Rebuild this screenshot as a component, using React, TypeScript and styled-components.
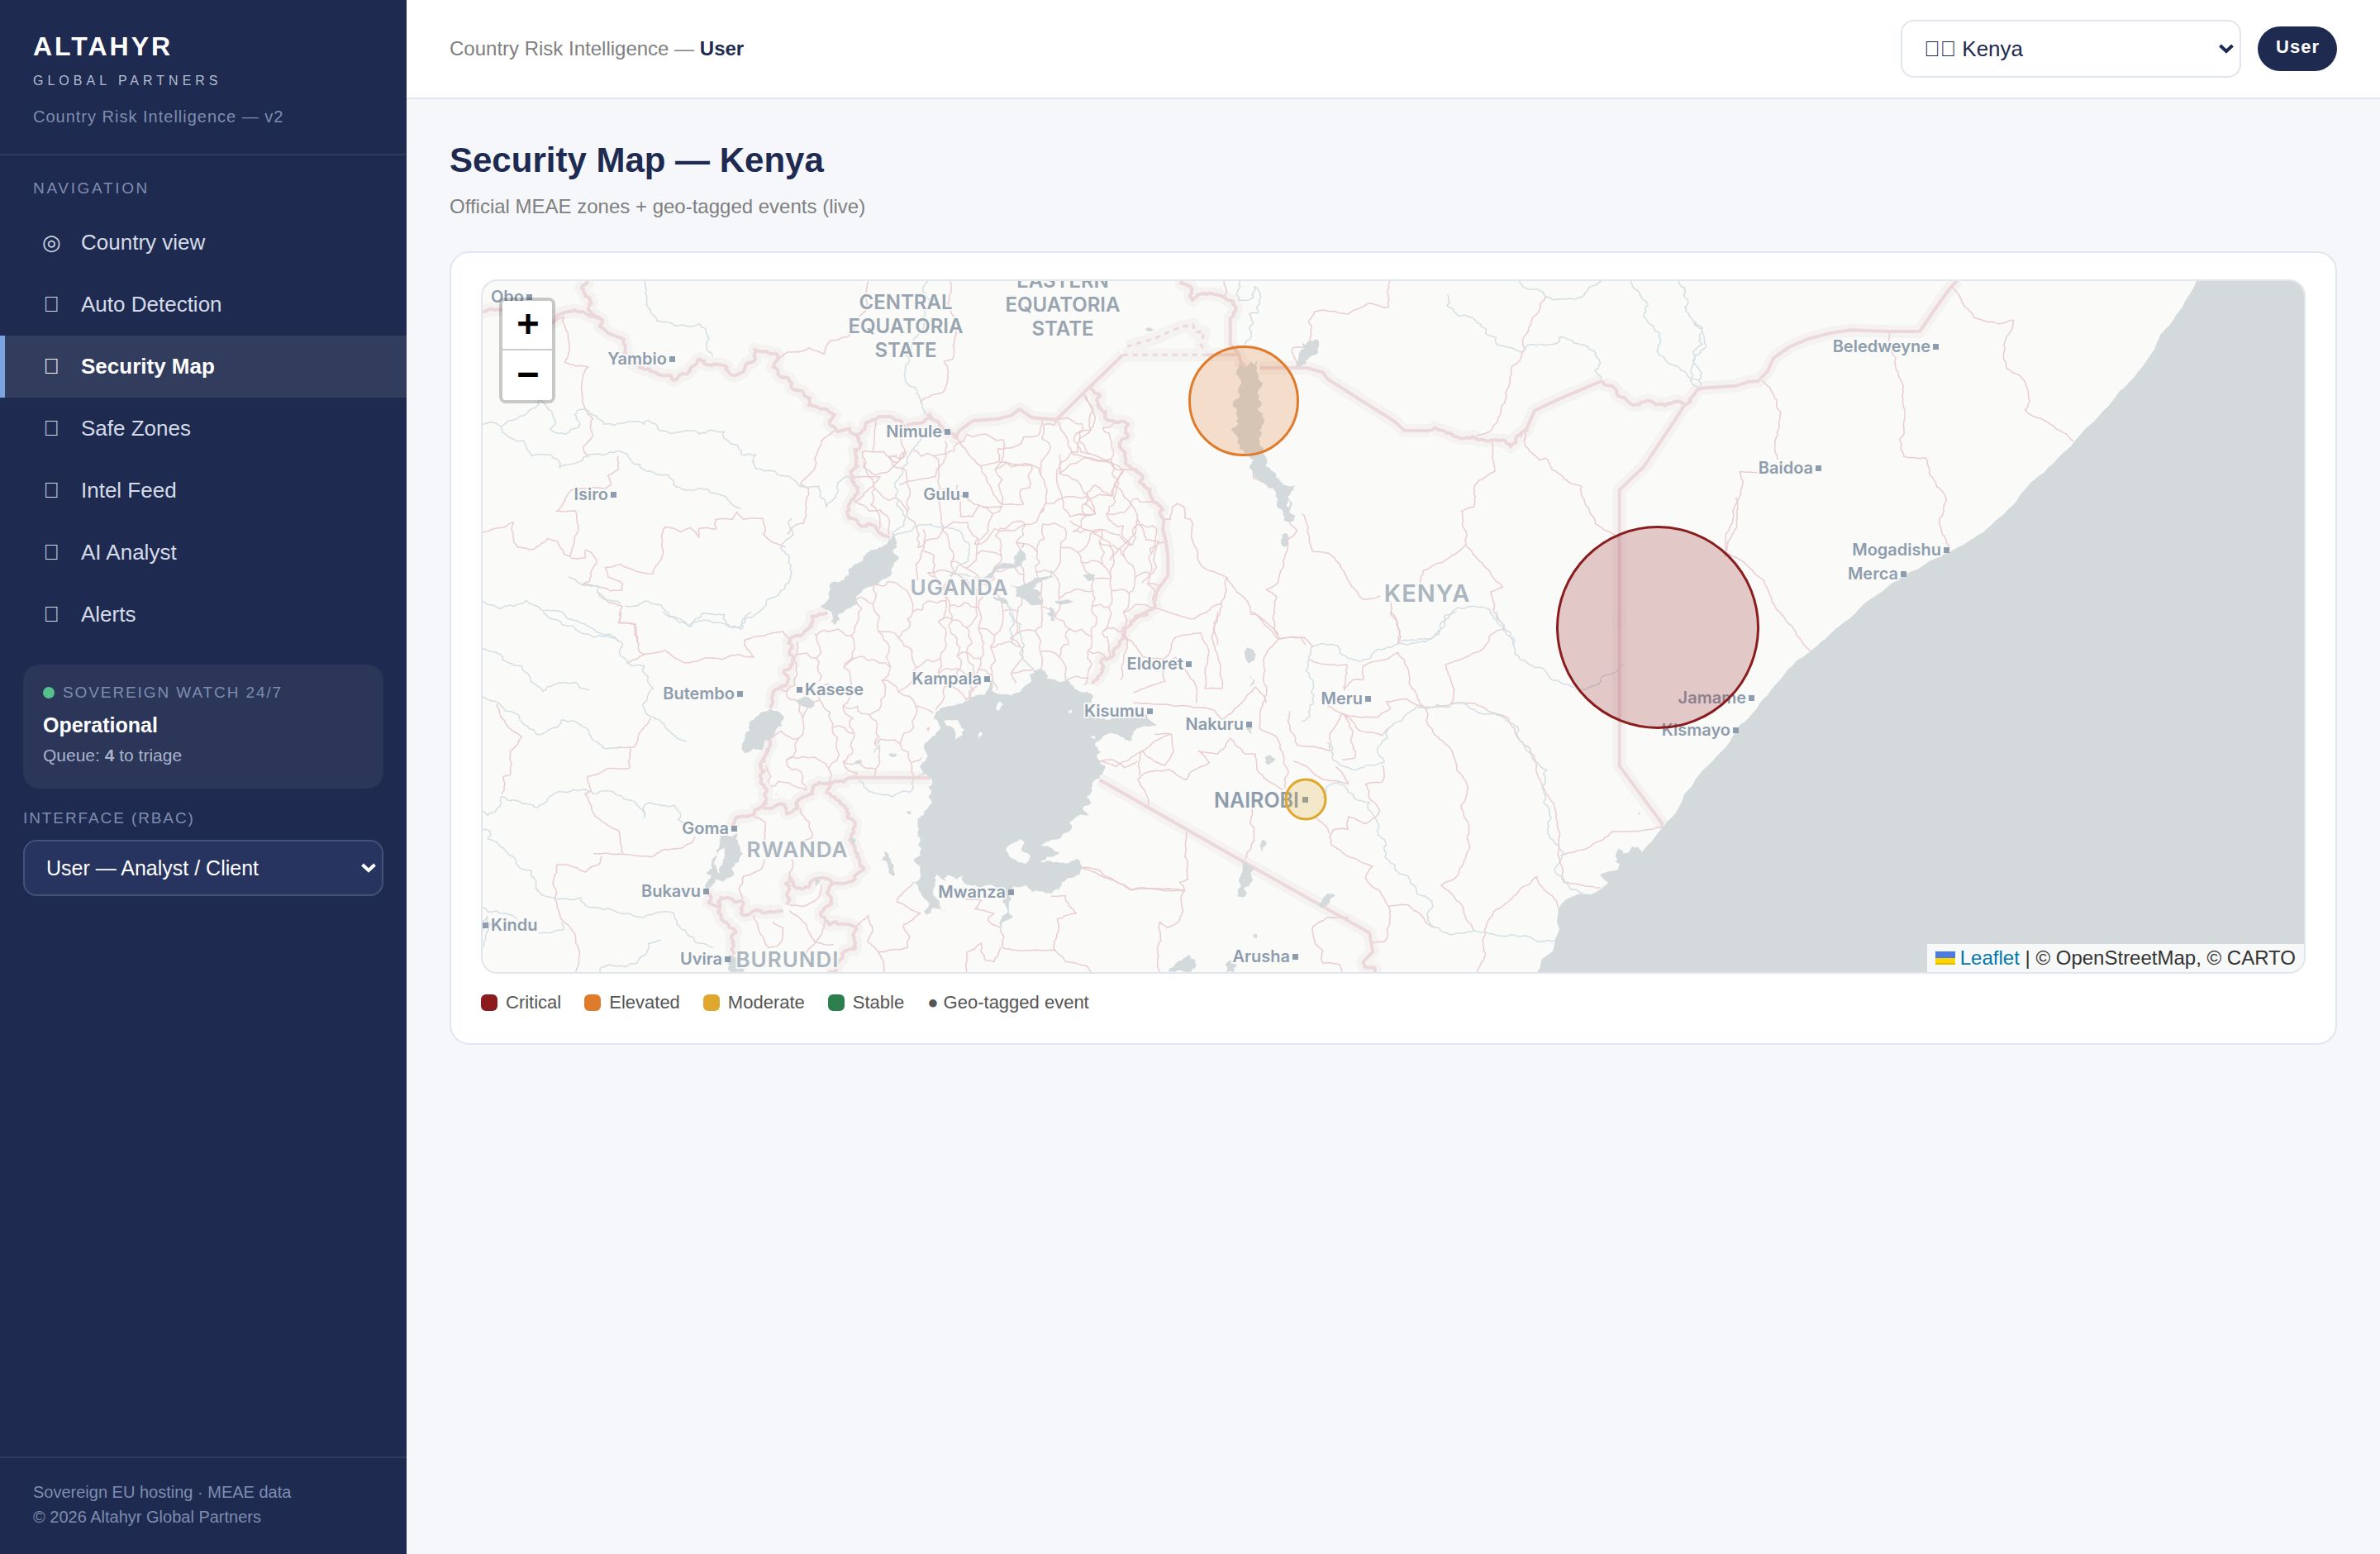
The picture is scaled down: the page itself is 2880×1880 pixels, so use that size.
import React from "react";
import styled, { createGlobalStyle, css } from "styled-components";

/* ------------------------------------------------------------------ */
/* Theme                                                               */
/* ------------------------------------------------------------------ */

const c = {
  navy: "#1e2a4f",
  navyField: "#27345f",
  navyFieldLine: "#465177",
  page: "#f5f7fb",
  line: "#e2e6ed",
  muted: "#808080",
  sideText: "#d5dbe8",
  sideMuted: "#7f8db0",
  critical: "#8b1c1e",
  elevated: "#e07b2c",
  moderate: "#dfa72c",
  stable: "#2c7f4d",
  land: "#fafaf8",
  water: "#d4dadc",
};

const GlobalStyle = createGlobalStyle`
  *, *::before, *::after { box-sizing: border-box; }
  body {
    margin: 0;
    background: ${c.page};
    color: ${c.navy};
    font-family: "Liberation Sans", Arial, Helvetica, sans-serif;
    font-size: 26px;
    line-height: 1.5;
  }
`;

/* ------------------------------------------------------------------ */
/* Sidebar                                                             */
/* ------------------------------------------------------------------ */

const Shell = styled.div`
  display: flex;
  min-height: 100vh;
`;

const Sidebar = styled.aside`
  display: flex;
  flex-direction: column;
  flex: 0 0 492px;
  background: ${c.navy};
`;

const Brand = styled.div`
  padding: 32px 40px 30px;
  border-bottom: 2px solid rgba(255, 255, 255, 0.08);
`;

const BrandName = styled.div`
  font-size: 32px;
  line-height: 48px;
  font-weight: 700;
  letter-spacing: 3px;
  color: #fff;
`;

const BrandSub = styled.div`
  margin-top: 6px;
  font-size: 16px;
  line-height: 24px;
  letter-spacing: 5px;
  color: #b3bdd2;
`;

const BrandTag = styled.div`
  margin-top: 16px;
  font-size: 20px;
  line-height: 30px;
  letter-spacing: 1px;
  color: ${c.sideMuted};
`;

const caption = css`
  display: block;
  font-size: 19px;
  line-height: 28px;
  letter-spacing: 0.1em;
  color: ${c.sideMuted};
`;

const NavTitle = styled.div`
  ${caption}
  padding: 26px 40px 14px;
  letter-spacing: 0.14em;
`;

const NavItem = styled.a<{ $active?: boolean }>`
  display: flex;
  align-items: center;
  gap: 20px;
  height: 75px;
  padding: 0 40px;
  border-left: 6px solid ${(p) => (p.$active ? "#7ba3e0" : "transparent")};
  background: ${(p) => (p.$active ? "rgba(255, 255, 255, 0.09)" : "none")};
  color: ${(p) => (p.$active ? "#fff" : c.sideText)};
  font-weight: ${(p) => (p.$active ? 700 : 400)};
  text-decoration: none;
`;

const NavIcon = styled.span`
  width: 32px;
  text-align: center;
  font-weight: 400;
`;

const Watch = styled.section`
  margin: 23px 28px 0;
  padding: 20px 24px 24px;
  border-radius: 20px;
  background: rgba(255, 255, 255, 0.06);
`;

const WatchLabel = styled.div`
  ${caption}
  display: flex;
  align-items: center;
  gap: 10px;
`;

const Dot = styled.span`
  width: 14px;
  height: 14px;
  border-radius: 50%;
  background: #55c18c;
`;

const WatchState = styled.div`
  margin-top: 6px;
  font-size: 25px;
  line-height: 38px;
  font-weight: 700;
  color: #fff;
`;

const WatchQueue = styled.div`
  margin-top: 2px;
  font-size: 21px;
  line-height: 32px;
  color: #a9b3cc;
`;

const RoleField = styled.div`
  margin: 22px 28px 0;
`;

const RoleLabel = styled.label`
  ${caption}
  margin-bottom: 12px;
`;

const SideFooter = styled.footer`
  margin-top: auto;
  padding: 26px 40px 30px;
  border-top: 2px solid rgba(255, 255, 255, 0.08);
  font-size: 20px;
  line-height: 30px;
  color: ${c.sideMuted};
`;

/* ------------------------------------------------------------------ */
/* Select                                                              */
/* ------------------------------------------------------------------ */

const SelectWrap = styled.div`
  position: relative;
`;

const SelectBox = styled.select<{ $dark?: boolean }>`
  appearance: none;
  display: block;
  width: 100%;
  height: ${(p) => (p.$dark ? 68 : 70)}px;
  padding: 0 48px 0 26px;
  border: 2px solid ${(p) => (p.$dark ? c.navyFieldLine : c.line)};
  border-radius: 16px;
  background: ${(p) => (p.$dark ? c.navyField : "#fff")};
  color: ${(p) => (p.$dark ? "#fff" : c.navy)};
  font-family: inherit;
  font-size: ${(p) => (p.$dark ? 25 : 26)}px;
`;

const SelectArrow = styled.svg<{ $dark?: boolean }>`
  position: absolute;
  right: 9px;
  top: 50%;
  width: 18px;
  height: 12px;
  margin-top: -6px;
  fill: none;
  stroke: ${(p) => (p.$dark ? "#fff" : c.navy)};
  stroke-width: 4;
  pointer-events: none;
`;

interface SelectProps {
  id: string;
  dark?: boolean;
  label?: string;
  options: string[];
}

function Select({ id, dark, label, options }: SelectProps) {
  return (
    <SelectWrap>
      <SelectBox id={id} $dark={dark} aria-label={label}>
        {options.map((o) => (
          <option key={o}>{o}</option>
        ))}
      </SelectBox>
      <SelectArrow $dark={dark} viewBox="0 0 18 12" aria-hidden="true">
        <path d="M1.5 2 L9 9 L16.5 2" />
      </SelectArrow>
    </SelectWrap>
  );
}

/* ------------------------------------------------------------------ */
/* Main column                                                         */
/* ------------------------------------------------------------------ */

const Main = styled.div`
  flex: 1;
  min-width: 0;
`;

const Topbar = styled.header`
  display: flex;
  align-items: center;
  gap: 20px;
  height: 120px;
  padding: 0 52px;
  border-bottom: 2px solid ${c.line};
  background: #fff;
`;

const Crumb = styled.div`
  margin-right: auto;
  font-size: 24px;
  color: ${c.muted};

  strong {
    color: ${c.navy};
  }
`;

const CountryField = styled.div`
  width: 412px;
`;

const RoleBadge = styled.span`
  padding: 11px 21px 15px 22px;
  border-radius: 27px;
  background: ${c.navy};
  color: #fff;
  font-size: 22px;
  line-height: 28px;
  font-weight: 700;
  letter-spacing: 1px;
`;

const Content = styled.main`
  padding: 48px 52px;
`;

const Title = styled.h1`
  margin: 0;
  font-size: 42px;
  line-height: 52px;
`;

const Subtitle = styled.p`
  margin: 12px 0 36px;
  font-size: 24px;
  line-height: 36px;
  color: ${c.muted};
`;

const Card = styled.section`
  padding: 32px 36px;
  border: 2px solid ${c.line};
  border-radius: 24px;
  background: #fff;
`;

const MapFrame = styled.div`
  position: relative;
  height: 840px;
  overflow: hidden;
  border: 2px solid ${c.line};
  border-radius: 20px;
  background: ${c.land};
`;

const MapCanvas = styled.svg`
  display: block;
  width: 100%;
  height: 100%;

  path {
    fill: none;
    vector-effect: non-scaling-stroke;
    stroke-linejoin: round;
  }
`;

const ZoomControl = styled.div`
  position: absolute;
  left: 20px;
  top: 20px;
  display: flex;
  flex-direction: column;
  border: 4px solid rgba(0, 0, 0, 0.2);
  border-radius: 8px;
  background-clip: padding-box;
`;

const ZoomButton = styled.button`
  width: 60px;
  height: 60px;
  padding: 0 0 4px;
  border: 0;
  background: #fff;
  color: #000;
  font: 700 44px / 54px "Lucida Console", Monaco, monospace;
  text-indent: 2px;

  &:first-child {
    border-bottom: 2px solid #ccc;
    border-radius: 4px 4px 0 0;
  }

  &:last-child {
    border-radius: 0 0 4px 4px;
  }
`;

const Attribution = styled.div`
  position: absolute;
  right: 0;
  bottom: 0;
  padding: 0 10px;
  background: rgba(255, 255, 255, 0.8);
  color: #333;
  font-size: 24px;
  line-height: 34px;

  a {
    color: #0078a8;
    text-decoration: none;
  }

  svg {
    width: 24px;
    height: 16px;
    margin-right: 6px;
  }
`;

const Legend = styled.ul`
  display: flex;
  flex-wrap: wrap;
  gap: 28px;
  margin: 18px 0 0;
  padding: 0;
  list-style: none;
  font-size: 22px;
  line-height: 34px;
  color: #555;
`;

const LegendItem = styled.li`
  display: flex;
  align-items: center;
  gap: 10px;
`;

const Swatch = styled.span<{ $color: string }>`
  width: 20px;
  height: 20px;
  border-radius: 6px;
  background: ${(p) => p.$color};
`;

/* ------------------------------------------------------------------ */
/* Base map                                                            */
/* ------------------------------------------------------------------ */

type Pt = [number, number];

/** Small deterministic random source, so the map is the same every time. */
function randomFrom(seed: number) {
  let s = seed;
  return () => {
    s = (s * 16807) % 2147483647;
    return s / 2147483647 - 0.5;
  };
}

/** Turns "x,y x,y" into a path whose segments wander like a natural line. */
function trace(points: string, rough = 0.3, close = false): string {
  const pts = points
    .trim()
    .split(/\s+/)
    .map((p) => p.split(",").map(Number) as Pt);
  if (close) pts.push(pts[0]);
  const rnd = randomFrom(points.length * 977 + Math.round(pts[0][0]) + 7);
  const out: Pt[] = [pts[0]];
  const split = (a: Pt, b: Pt) => {
    const dx = b[0] - a[0];
    const dy = b[1] - a[1];
    const len = Math.hypot(dx, dy);
    if (rough === 0 || len < 9) {
      out.push(b);
      return;
    }
    const k = rnd() * rough;
    const m: Pt = [(a[0] + b[0]) / 2 - dy * k, (a[1] + b[1]) / 2 + dx * k];
    split(a, m);
    split(m, b);
  };
  for (let i = 1; i < pts.length; i++) split(pts[i - 1], pts[i]);
  return (
    "M" +
    out.map((p) => `${p[0].toFixed(1)} ${p[1].toFixed(1)}`).join("L") +
    (close ? "Z" : "")
  );
}

/** Irregular honeycomb of district limits inside a rectangle. */
function districts(x0: number, y0: number, x1: number, y1: number, w: number, h: number, seed: number) {
  const rnd = randomFrom(seed);
  const cols = Math.ceil((x1 - x0) / w) + 1;
  const rows = Math.ceil((y1 - y0) / h) + 1;
  const grid: Pt[][] = [];
  for (let r = 0; r < rows; r++) {
    grid.push([]);
    for (let q = 0; q < cols; q++) {
      grid[r].push([x0 + (q + rnd() * 0.8) * w, y0 + (r + rnd() * 0.8) * h]);
    }
  }
  const lines: string[] = [];
  const add = (a: Pt, b: Pt) =>
    lines.push(trace(`${a[0].toFixed(1)},${a[1].toFixed(1)} ${b[0].toFixed(1)},${b[1].toFixed(1)}`, 0.5));
  for (let r = 0; r < rows; r++) {
    for (let q = 0; q < cols; q++) {
      if (q + 1 < cols && (q + r) % 2 === 0) add(grid[r][q], grid[r][q + 1]);
      if (r + 1 < rows) add(grid[r][q], grid[r + 1][q]);
    }
  }
  return lines.join("");
}

interface Region {
  x: number;
  y: number;
  sx: number;
  sy: number;
  borders?: string[];
  straight?: string[];
  dashed?: string[];
  admin?: string[];
  rivers?: string[];
  lakes?: string[];
  islands?: string[];
}

/* Each region has its own grid, placed on the map by x, y, sx and sy. */
const K = 1 / 1.96;
const regions: Region[] = [
  {
    x: 560, y: 320, sx: K, sy: 1 / 3,
    borders: [
      "294,56 290,115 300,150 325,195 325,225 345,250 375,265 385,300 388,325 440,378 465,400 485,402 498,420 515,400 540,385 562,343 575,362 605,362 625,370 645,403 668,385 685,355 692,308 715,315 748,345 748,400 772,412 778,440 808,465 820,510 850,525 882,545 885,602 918,595 935,625 945,610 955,585 990,552 1010,552 1050,590 1085,575 1107,543 1130,580 1150,610 1172,630 1176,605",
      "40,175 70,162 110,165 150,190 215,210 235,178 265,165 300,188 325,198",
      "935,625 945,650 935,700 922,760 938,810 920,860 915,920 945,950 965,940 985,970 1010,995",
    ],
    straight: ["1176,605 1210,567 1270,560 1300,548 1321,525 1350,556 1408,563 1495,432"],
    admin: [
      "215,200 240,190 250,270 242,355 298,372 284,480 290,520 308,560 308,620 286,660 298,700",
      "368,695 368,745 344,768 352,800 340,812 300,812 262,815 240,860 222,895 268,895 275,950 265,1000 255,1060 240,1050 225,1005 200,995 165,1035 130,1025 120,935 95,955 47,972",
      "255,1065 290,1065 292,1035 318,1075 300,1150 285,1160 320,1168 350,1185 378,1182 380,1160 345,1135 338,1100 375,1088 400,1105 452,1122 475,1050 480,952 515,970 540,955 560,990 560,958 600,960 600,925 640,925 650,898 665,925 712,922 712,980 765,1025",
      "885,602 850,640 835,700 830,750 802,800 820,815 815,880 808,940 790,945 770,980",
      "962,58 955,170 943,185 942,215 912,262 872,275 858,325 820,303 795,318 770,318 750,342",
      "1157,56 1158,170 1168,210 1160,345 1142,352 1150,370 1150,425 1138,465 1095,485 1085,505",
      "978,565 975,680 948,680 950,735 980,765 1005,755 1030,720 1045,680",
      "1040,625 1045,700 1030,720 1000,680 975,680",
      "1145,640 1140,720 1120,770 1060,785 1035,800",
      "1172,630 1200,690 1228,730 1270,715 1270,668 1320,655 1330,625 1365,620 1375,565",
      "1408,563 1448,690 1480,700 1540,720 1568,745",
      "1415,690 1412,800 1440,915 1500,905 1480,830 1500,800 1540,840 1550,790 1568,745",
      "1228,730 1250,800 1280,870 1330,870 1325,815 1345,810 1350,730 1270,715",
      "1172,800 1180,915 1210,915 1225,875 1280,880",
      "1440,930 1535,1010 1535,1140 1500,1140",
      "1093,962 1093,1030 1075,1090 1080,1145",
      "1093,1040 1118,1055 1120,1130",
      "930,770 990,770 960,820 930,860 965,895 990,890 1010,920 1010,980",
      "320,1190 345,1225 378,1240 370,1300 410,1305 418,1380",
      "1470,470 1495,530 1490,600 1462,605 1462,640 1485,690",
    ],
    rivers: [
      "432,56 437,120 460,205 500,220 560,215 580,255 580,310 592,335",
      "180,492 135,550 92,588 70,572 47,583",
      "185,492 207,530 207,600 245,615 275,590 272,530 290,525",
      "92,588 105,622 145,640 165,695 208,690 230,738 270,720 310,688 385,685 430,745 520,815 580,815 620,840 635,865 660,885",
      "290,525 335,580 380,575 410,570 430,580 440,565 465,600 520,605 560,615 620,605 635,650 660,690 695,690 695,740 740,750 800,805 845,805 862,880 885,845 890,790 915,768 935,815",
      "780,920 760,1010 775,1060 780,1120 750,1195 720,1220 705,1260 670,1285 660,1325 625,1300 620,1270 570,1265 540,1315 490,1275 470,1235 430,1222 385,1240",
      "47,1222 90,1250 150,1220 200,1255 260,1290 320,1335 370,1365",
      "250,1135 285,1165 325,1170 335,1215 375,1230",
      "1103,56 1095,170 1070,270 1050,330 1052,430 1090,510 1115,555 1135,585",
      "1085,630 1055,700 1035,775 1030,830 1050,915 1045,950 1020,980",
      "1020,980 1065,965 1110,942 1185,980 1200,1010 1195,1080 1155,1130 1205,1132",
      "1275,1210 1300,1250 1310,1380",
    ],
    lakes: [
      "1018,975 1030,1010 1033,1060 1022,1095 1015,1130 985,1160 955,1175 935,1215 910,1250 895,1290 880,1308 872,1295 868,1255 848,1240 868,1200 870,1170 915,1105 950,1060 995,1025 1010,1000",
      "1205,1130 1245,1128 1265,1095 1285,1082 1310,1090 1325,1030 1332,1012 1335,1060 1312,1100 1290,1100 1255,1140 1215,1138",
      "1298,1165 1340,1155 1355,1135 1390,1132 1396,1108 1400,1135 1370,1150 1342,1178 1370,1190 1375,1235 1350,1237 1312,1205",
      "1405,1220 1450,1222 1430,1232 1408,1230",
      "1470,1130 1500,1125 1490,1148",
      "1245,1205 1275,1210 1300,1240 1280,1230",
      "1395,1240 1405,1290 1398,1295",
    ],
  },
  {
    x: 1300, y: 320, sx: K, sy: 1 / 3,
    borders: [
      "250,56 278,95 280,130 315,108 355,118 378,135 375,190",
      "45,432 60,470 55,500 75,535 75,560 95,570 128,580 128,620 118,632 120,680 130,730 147,745 155,790 180,815 185,850 210,890 213,925",
      "845,603 855,592 880,608 915,630 945,625 975,640 1025,647 1035,662 1048,625 1075,588",
      "1252,422 1285,455 1325,510 1380,508 1420,500 1448,508 1465,480 1487,448",
    ],
    straight: [
      "45,432 115,328",
      "310,328 388,326",
      "375,190 370,195 370,290 390,325 395,355 405,370",
      "440,375 552,375 590,392 600,415 760,570 782,602 845,603",
      "1075,588 1092,530 1150,488 1252,422",
      "1448,508 1420,575 1350,735 1293,818 1293,1320",
      "213,925 210,960 218,1010 222,1060 222,1130 200,1175 188,1210 192,1245 165,1265 145,1285",
    ],
    dashed: ["115,328 310,328", "125,298 190,268 250,228 282,218 285,245 308,245 300,290 312,318"],
    admin: [
      "355,56 355,118",
      "749,56 745,155 735,157 700,140 650,180 615,170 570,170 556,210 556,295 518,302 528,370",
      "1120,115 1082,220 1068,310 1033,430 1022,490 990,600 955,620",
      "992,645 998,750 950,800 948,880 918,895 928,1018 970,1090 1016,1170 988,1188 1020,1320",
      "928,1018 828,1110 820,1155",
      "750,1220 750,1265 765,1295 767,1380",
      "1075,588 1067,640 1102,710 1118,703 1162,778 1203,805 1210,860 1235,940 1270,970 1290,995",
      "1568,845 1545,1060",
      "213,925 228,925 232,880 245,867 262,885 262,920 276,925 282,1010 292,1065 312,1105 362,1135 420,1270 435,1272 485,1358 540,1355 550,1380",
      "362,1135 348,1230 340,1380",
      "540,905 565,1040 608,1052 635,1105 655,1160 685,1215 725,1203",
      "510,935 528,965 505,1000 495,1100 480,1160 455,1180 480,1205 475,1300 480,1345",
      "425,710 425,775 445,790",
      "25,475 45,540 35,610 12,632 15,680 60,700 100,745 147,745",
      "115,745 95,800 90,840 60,835 25,870 50,905 5,908",
      "95,800 150,925 130,1000 85,1075",
      "150,925 170,1000 200,1005 195,1100 160,1155",
      "190,1245 230,1265 285,1285 330,1240 348,1230",
    ],
    rivers: [
      "388,56 390,130 425,120 428,80 440,110 436,175 415,180 418,240 405,290",
      "885,108 910,185 940,190 975,250 1000,265 1010,295 1060,318 1075,292 1120,292 1145,285 1150,265 1200,290 1245,350 1252,415",
      "1055,60 1065,82 1100,90 1120,118 1150,125 1210,110 1225,80 1250,60",
      "1320,60 1350,130 1360,210 1390,270 1400,340 1440,385 1480,420",
      "1433,60 1450,170 1490,230 1490,290 1470,360 1485,445",
      "1040,1380 1020,1320 990,1270 945,1240 910,1245 870,1320 850,1355 800,1362 767,1370",
    ],
    lakes: [
      "388,360 400,375 420,352 430,365 438,345 440,420 445,440 437,490 450,560 440,600 440,640 447,685 455,700 470,750 478,770 497,800 525,802 525,915 510,935 497,930 495,905 480,880 478,840 450,795 425,770 428,710 405,690 392,670 388,630 372,600 375,510 388,460 385,400",
      "530,370 532,325 545,300 540,278 550,296 572,270 580,280 578,315 555,345",
      "498,975 507,980 498,1025 490,1010",
      "168,235 180,228 190,236 175,243",
      "20,1130 50,1125 38,1150",
    ],
    islands: ["507,855 512,870 508,882 502,872"],
  },
  {
    x: 2050, y: 320, sx: K, sy: 1 / 3,
    straight: [
      "15,449 100,440 130,425 152,423 175,385 188,340 225,300 270,270 320,250 370,238 465,243 535,243 570,165 605,90 625,56",
    ],
    admin: [
      "611,78 663,193 722,215 757,202 752,240 735,293 742,378 787,433 785,527 900,640",
      "463,243 478,370 500,535 497,575 498,697 549,702 558,760 598,848 596,995 605,1025",
      "162,420 205,537 202,590 198,708",
      "150,755 108,752 92,900 75,1045 178,1192 225,1305 270,1395 322,1480",
    ],
    rivers: ["0,210 24,265 5,330 12,445"],
  },
  {
    x: 560, y: 740, sx: K, sy: 1 / 2.904,
    borders: [
      "865,2 828,15 820,60 800,85 775,95 778,195 765,205 750,270 735,285 730,340",
      "725,440 715,510 715,560 708,585 710,685",
      "920,582 905,598 865,603 845,600 830,640 795,690 768,710 755,675 710,685 685,715 665,718 645,755",
      "865,603 885,660 912,695 930,750 930,830 940,870 930,940 900,955 878,955 850,935 825,950 805,975 775,935 775,975 768,1030",
      "760,1050 740,1055 665,1065 665,1020 630,1005 612,1005 610,1035 585,1025 580,990",
      "878,955 872,1000 875,1025 855,1050 860,1085 870,1100 885,1090 930,1108 930,1185 900,1200 890,1230 865,1270",
      "610,1035 605,1055 620,1090 648,1125 645,1205",
      "1625,5 1595,22 1580,50 1570,90 1550,125 1545,150 1518,165 1515,215 1495,255",
    ],
    straight: ["1108,584 920,582"],
    admin: [
      "375,0 370,40 408,45 418,140 430,150 390,180",
      "430,150 480,135 525,180 575,162 615,168 655,150 690,160 668,100 715,85 760,70 775,95",
      "80,325 90,370 140,440 112,490 110,575 95,580 92,640",
      "445,375 425,415 408,475 360,478",
      "398,478 395,550 345,550 295,580 305,630 290,640 315,720 370,770 380,848",
      "310,848 380,852 445,862 480,835 520,830 545,810 550,790",
      "330,860 325,885 290,915 250,890 222,890 215,940 220,1010 240,1090 268,1150 268,1266",
      "685,715 718,740 715,810",
      "800,690 830,790 800,810",
      "715,870 710,900 665,930 655,975 665,1010",
      "780,870 775,930",
      "850,960 840,1010 805,1035 775,1030",
      "690,1065 705,1130 725,1180 745,1175 760,1110 735,1090",
      "775,1050 815,1100 835,1160 880,1170",
      "860,1090 835,1165 815,1200",
      "930,1108 962,1068 972,1120 960,1160 985,1195 1000,1266",
      "985,1195 1055,1180 1060,1140 1045,1100 1085,1060 1030,1020 1070,950",
      "1395,1000 1430,998 1455,1060 1410,1080 1405,1190 1345,1190 1280,1180 1275,1110",
      "1195,1266 1195,1200 1230,1165 1240,1225 1260,1230 1275,1180",
      "1190,1008 1230,1015 1215,1045 1260,1060 1245,1085 1275,1110",
      "1467,900 1500,915 1550,950 1585,978 1710,978",
      "1405,1190 1430,1230 1480,1245 1490,1266",
      "1505,525 1540,520 1568,548 1600,525",
    ],
    rivers: [
      "47,130 90,150 110,180 140,190 165,250 190,280 215,255 270,250 300,278",
      "190,0 260,50 310,90 345,85 375,105 385,165 400,190 430,190 438,240 452,270 448,370",
      "448,370 480,405 530,455",
      "47,300 85,320 130,360 150,400 180,432 235,380 265,385 300,430 325,465 370,480",
      "90,650 130,665 175,690 200,660 265,625 310,640 350,630 380,655 410,675 430,722 445,670 500,680 510,730 530,745",
      "90,650 78,700 60,715 47,700",
      "47,765 65,770 60,800 100,840 130,890 175,950 185,990 225,1010 280,1005 290,1030 350,1045 410,1070 450,1065 500,1060 515,1110 550,1160 595,1180",
      "47,1040 60,1055 100,1060 130,1080",
      "47,1125 58,1070 50,1180",
      "470,1155 440,1165 425,1210 390,1245 345,1240 325,1266",
      "475,0 540,52 570,30 615,40 655,55 670,15 685,0",
      "940,585 960,625 985,640 1020,650 1060,635 1065,600 1095,572",
      "180,1130 205,1130 240,1115 235,1090",
      "1305,0 1325,90 1330,170 1355,200",
      "990,450 975,495",
    ],
    lakes: [
      "730,340 750,352 762,370 758,400 740,430 720,450 712,485 690,480 670,498 662,475 670,440 680,400 695,370",
      "790,310 820,300 835,320 825,340 812,335",
      "610,790 650,775 655,820 665,850 655,880 640,910 620,945 600,940 590,965 580,985 575,960 590,925 578,920 590,880 600,840",
      "632,1205 650,1215 665,1250 665,1266 635,1266",
      "1250,240 1255,275 1275,290 1300,295 1330,265 1350,240 1345,220 1370,200 1385,235 1410,245 1435,240 1450,270 1480,280 1495,300 1480,330 1500,365 1530,380 1568,360 1620,360 1645,400 1610,405 1590,420 1585,455 1560,440 1530,430 1500,470 1505,515 1525,550 1510,585 1490,620 1480,650 1490,670 1470,690 1490,715 1455,720 1440,745 1440,770 1420,790 1400,800 1370,820 1395,830 1415,850 1385,860 1370,880 1430,885 1455,868 1467,890 1465,915 1420,950 1395,990 1350,985 1335,960 1305,965 1300,985 1295,1040 1305,1070 1280,1110 1275,1085 1290,1060 1285,990 1260,965 1225,970 1200,960 1185,925 1170,940 1150,925 1145,950 1125,920 1120,950 1115,985 1130,1020 1145,1055 1115,1040 1100,1070 1090,1000 1072,950 1085,900 1070,870 1085,800 1095,700 1110,640 1112,590 1085,540 1100,500 1105,450 1130,400 1125,350 1160,330 1200,310 1240,290",
      "1000,840 1015,870 1022,930 1010,900",
      "930,530 945,520 940,535",
      "1010,500 1030,502 1020,512",
      "918,800 930,798 928,825",
      "835,940 848,945 838,965",
      "1052,705 1062,700 1064,712",
    ],
    islands: [
      "612,835 622,830 618,880 608,920 604,905",
      "1290,830 1320,798 1332,815 1325,840 1345,865 1335,885 1300,865",
      "1140,385 1170,380 1190,415 1185,435 1168,455 1165,410",
      "1265,345 1275,315 1283,325 1272,348",
      "1222,445 1228,420 1232,428",
      "1488,442 1500,435 1502,448",
      "1436,350 1444,345 1442,358",
    ],
  },
  {
    x: 1300, y: 740, sx: K, sy: 1 / 2.904,
    straight: [
      "1293,0 1293,542 1393,742 1393,758",
      "60,590 400,878 700,1128 708,1195 685,1230 690,1250 712,1250 715,1270",
    ],
    admin: [
      "485,95 545,90 565,125",
      "485,95 455,150 450,250 440,410 480,440 497,520 508,560 500,620",
      "420,0 485,95",
      "750,0 765,30 768,110",
      "558,168 645,185 640,275 660,240 685,240 685,190 768,143 795,255 835,345 900,510 930,600 935,765 938,825 900,940 870,960 947,1122",
      "1020,58 985,85 960,140 880,185 892,325 950,322 1025,370 1055,450 1080,480 1100,580 1125,650 1145,750 1160,950 1200,960 1248,970",
      "1393,758 1275,773 1153,857",
      "892,335 830,335 790,308 740,315 750,340 720,370 680,372 635,358 600,330",
      "635,358 680,420 730,435 745,410",
      "635,358 660,420 665,515 635,520",
      "635,358 605,430 605,490 530,470 510,350",
      "520,525 590,590 650,605 620,545",
      "690,605 728,600 730,540",
      "690,605 725,700 690,745 650,720 650,765 615,765 605,790 610,820 650,860 708,895 690,935 745,1035 790,1030 850,1110",
      "745,1035 735,1160 708,1162",
      "975,1130 1097,930 1150,1045",
      "975,1130 955,1266",
      "570,720 605,780",
      "420,690 405,870",
      "268,770 262,860 270,940 250,950 262,980 250,1085 222,1110 203,1090 203,1266",
      "20,897 60,910 135,978 262,980",
      "650,1075 600,1075 565,1110 570,1165 590,1190 590,1235 630,1240 635,1266",
      "175,680 150,590 160,575 225,555 265,590 320,530 295,490 340,500 370,445 405,500 430,500 435,560 465,600 495,625",
      "140,320 200,325 260,330 330,345 350,380 390,330 430,265 455,320",
      "110,240 115,185 120,90 165,160 215,165 240,90 300,75 310,270 350,270 345,180 330,60 340,0",
      "140,285 215,245 215,180 240,160 280,240 290,320",
      "190,430 230,430 235,495 215,540 160,490 155,575",
      "60,525 100,545 130,520 160,490 230,430",
    ],
    rivers: [
      "1003,0 1020,58 1045,130 1085,190 1120,215 1155,250 1195,272 1235,260 1255,225 1303,185",
      "905,0 870,60 850,90 768,110 735,130 700,165 650,165 625,120 565,122 558,170 565,240 558,360 540,385",
      "600,460 615,500 630,540 670,555 735,530 745,410 775,385 810,335 860,328 950,345 1010,365 1050,440 1085,500 1110,620 1130,720 1140,900 1165,950 1205,988",
      "590,655 625,600 660,640 710,720 740,820 760,890 805,960 840,1075 850,1105 905,1130 950,1120 1035,1135 1075,1140 1105,1160 1140,1155",
    ],
    lakes: [
      "400,875 425,905 420,950 405,1000 385,1000 390,945 395,930",
      "225,1266 255,1225 272,1205 288,1225 278,1266",
      "358,1266 368,1222 385,1240 378,1266",
      "580,1030 605,990 620,998 600,1030 585,1040",
      "405,150 412,125 430,155 415,182",
      "452,515 464,502 477,520 462,538",
      "410,400 422,400 420,430 415,425",
      "415,225 422,250 420,270",
      "443,830 450,800 455,810 446,845",
      "424,1135 432,1132 432,1148",
      "1336,710 1344,703 1342,718",
      "1283,880 1290,830 1300,850 1325,825 1342,845 1300,885",
    ],
  },
];

const ocean =
  "2661,336 2647,360 2634,380 2614,405 2604,427 2593,443 2565,473 2545,497 2522,520 2494,550 2473,572 2445,598 2425,622 2410,635 2387,652 2361,667 2333,680 2307,694 2290,705 2268,722 2245,742 2220,762 2198,782 2188,790 2143,835 2105,877 2067,926 2051,944 2038,961 2022,990 2009,1004 1987,1031 1981,1024 1962,1036 1958,1052 1936,1058 1946,1068 1925,1082 1911,1081 1895,1088 1886,1099 1884,1115 1887,1124 1882,1136 1879,1151 1866,1160 1859,1180";

const uganda =
  "1145,535 1170,510 1280,500 1312,468 1345,500 1362,530 1375,580 1408,625 1412,690 1395,740 1365,770 1340,800 1320,830 1250,820 1190,840 1130,860 1110,940 1000,945 945,970 925,940 935,860 955,780 1000,760 1080,650 1035,620 1040,560";

interface Place {
  name: string;
  x: number;
  y: number;
  side?: "right";
}

const places: Place[] = [
  { name: "Obo", x: 640, y: 359 },
  { name: "Yambio", x: 813, y: 434 },
  { name: "Isiro", x: 742, y: 598 },
  { name: "Nimule", x: 1146, y: 522 },
  { name: "Gulu", x: 1168, y: 598 },
  { name: "Beledweyne", x: 2342, y: 419 },
  { name: "Baidoa", x: 2200, y: 566 },
  { name: "Mogadishu", x: 2355, y: 665 },
  { name: "Merca", x: 2303, y: 694 },
  { name: "Butembo", x: 895, y: 839 },
  { name: "Kasese", x: 967, y: 834, side: "right" },
  { name: "Kampala", x: 1194, y: 821 },
  { name: "Goma", x: 888, y: 1002 },
  { name: "Bukavu", x: 854, y: 1078 },
  { name: "Kindu", x: 587, y: 1119, side: "right" },
  { name: "Uvira", x: 880, y: 1160 },
  { name: "Mwanza", x: 1223, y: 1079 },
  { name: "Eldoret", x: 1438, y: 803 },
  { name: "Kisumu", x: 1391, y: 860 },
  { name: "Nakuru", x: 1511, y: 876 },
  { name: "Meru", x: 1655, y: 845 },
  { name: "Jamame", x: 2119, y: 844 },
  { name: "Kismayo", x: 2100, y: 883 },
  { name: "Arusha", x: 1567, y: 1157 },
];

const MapText = styled.text<{ $kind: "city" | "capital" | "state" | "country" | "major" }>`
  font-family: Inter, "Open Sans", sans-serif;
  font-weight: 600;
  font-size: ${(p) => ({ city: 20, capital: 25, state: 24, country: 26, major: 29 })[p.$kind]}px;
  letter-spacing: ${(p) => (p.$kind === "country" || p.$kind === "major" ? 1 : 0)}px;
  fill: ${(p) =>
    ({ city: "#8e9dad", capital: "#8e9dad", state: "#98a5b0", country: "#abb6c0", major: "#abb6c0" })[p.$kind]};
  stroke: ${c.land};
  stroke-width: 4px;
  stroke-opacity: 0.85;
  paint-order: stroke;
  text-anchor: middle;
`;

const CityText = styled(MapText)<{ $side?: "right" }>`
  text-anchor: ${(p) => (p.$side === "right" ? "start" : "end")};
`;

function BaseMap() {
  const at = (r: Region) => `translate(${r.x} ${r.y}) scale(${r.sx} ${r.sy})`;
  const each = (list: string[] | undefined, rough: number, close = false) =>
    (list ?? []).map((p) => trace(p, rough, close)).join("");
  return (
    <>
      <clipPath id="uganda">
        <path d={trace(uganda, 0, true)} />
      </clipPath>
      {regions.map((r, i) => (
        <g key={i} transform={at(r)} stroke="#f5f3f2" strokeWidth="16">
          <path d={each(r.borders, 0.5) + each(r.straight, 0) + each(r.dashed, 0)} />
        </g>
      ))}
      <g clipPath="url(#uganda)" stroke="#eacfd3" strokeWidth="1.5">
        <path d={districts(1040, 520, 1420, 640, 52, 44, 41)} />
        <path d={districts(1150, 640, 1420, 830, 27, 25, 977)} />
        <path d={districts(930, 700, 1150, 970, 34, 32, 5531)} />
      </g>
      {regions.map((r, i) => (
        <g key={i} transform={at(r)}>
          <path d={each(r.admin, 0.2)} stroke="#eacdd1" strokeWidth="1.5" />
          <path d={each(r.rivers, 0.4)} stroke="#d5dfe3" strokeWidth="1.5" />
          <path d={each(r.borders, 0.5) + each(r.straight, 0)} stroke="#ecd8da" strokeWidth="4" />
          <path d={each(r.dashed, 0)} stroke="#ecd8da" strokeWidth="3" strokeDasharray="6 6" />
        </g>
      ))}
      {regions.map((r, i) => (
        <g key={i} transform={at(r)}>
          <path d={each(r.lakes, 0.45, true)} style={{ fill: c.water }} />
          <path d={each(r.islands, 0.4, true)} style={{ fill: c.land }} />
        </g>
      ))}
      <path d={trace(ocean, 0.12) + "L3400 1180L3400 336Z"} style={{ fill: c.water }} />
    </>
  );
}

function MapLabels() {
  return (
    <>
      <MapText $kind="state" x="1096" y="374">CENTRAL</MapText>
      <MapText $kind="state" x="1096" y="403">EQUATORIA</MapText>
      <MapText $kind="state" x="1096" y="432">STATE</MapText>
      <MapText $kind="state" x="1286" y="348">EASTERN</MapText>
      <MapText $kind="state" x="1286" y="377">EQUATORIA</MapText>
      <MapText $kind="state" x="1286" y="406">STATE</MapText>
      <MapText $kind="country" x="1161" y="720">UGANDA</MapText>
      <MapText $kind="country" x="965" y="1037">RWANDA</MapText>
      <MapText $kind="country" x="953" y="1170">BURUNDI</MapText>
      <MapText $kind="major" x="1727" y="728">KENYA</MapText>
      {places.map((p) => (
        <g key={p.name}>
          <rect x={p.x - 3} y={p.y - 3} width="7" height="7" fill="#8e9dad" />
          <CityText $kind="city" $side={p.side} x={p.side ? p.x + 7 : p.x - 6} y={p.y + 7}>
            {p.name}
          </CityText>
        </g>
      ))}
      <rect x="1576" y="964" width="7" height="7" fill="#8e9dad" />
      <CityText $kind="capital" x="1572" y="977">NAIROBI</CityText>
    </>
  );
}

const zones = [
  { level: "Elevated", x: 1505, y: 485, r: 65.5, color: c.elevated },
  { level: "Critical", x: 2006, y: 759, r: 121.5, color: c.critical },
  { level: "Moderate", x: 1580, y: 967, r: 24, color: c.moderate },
];

/* ------------------------------------------------------------------ */
/* Page                                                                */
/* ------------------------------------------------------------------ */

const navItems = [
  { icon: "◎", label: "Country view" },
  { icon: "\u{10FF01}", label: "Auto Detection" },
  { icon: "\u{10FF02}", label: "Security Map", active: true },
  { icon: "\u{10FF03}", label: "Safe Zones" },
  { icon: "\u{10FF04}", label: "Intel Feed" },
  { icon: "\u{10FF05}", label: "AI Analyst" },
  { icon: "\u{10FF06}", label: "Alerts" },
];

const legend = [
  { label: "Critical", color: c.critical },
  { label: "Elevated", color: c.elevated },
  { label: "Moderate", color: c.moderate },
  { label: "Stable", color: c.stable },
];

export default function App() {
  return (
    <Shell>
      <GlobalStyle />
      <Sidebar>
        <Brand>
          <BrandName>ALTAHYR</BrandName>
          <BrandSub>GLOBAL PARTNERS</BrandSub>
          <BrandTag>Country Risk Intelligence — v2</BrandTag>
        </Brand>
        <nav>
          <NavTitle>NAVIGATION</NavTitle>
          {navItems.map((n) => (
            <NavItem key={n.label} href="#" $active={n.active} aria-current={n.active ? "page" : undefined}>
              <NavIcon>{n.icon}</NavIcon>
              {n.label}
            </NavItem>
          ))}
        </nav>
        <Watch>
          <WatchLabel>
            <Dot />
            SOVEREIGN WATCH 24/7
          </WatchLabel>
          <WatchState>Operational</WatchState>
          <WatchQueue>
            Queue: <strong>4</strong> to triage
          </WatchQueue>
        </Watch>
        <RoleField>
          <RoleLabel htmlFor="role">INTERFACE (RBAC)</RoleLabel>
          <Select id="role" dark options={["User — Analyst / Client"]} />
        </RoleField>
        <SideFooter>
          Sovereign EU hosting · MEAE data
          <br />© 2026 Altahyr Global Partners
        </SideFooter>
      </Sidebar>

      <Main>
        <Topbar>
          <Crumb>
            Country Risk Intelligence — <strong>User</strong>
          </Crumb>
          <CountryField>
            <Select id="country" label="Country" options={["\u{10FF07}\u{10FF08} Kenya"]} />
          </CountryField>
          <RoleBadge>User</RoleBadge>
        </Topbar>
        <Content>
          <Title>Security Map — Kenya</Title>
          <Subtitle>Official MEAE zones + geo-tagged events (live)</Subtitle>
          <Card>
            <MapFrame>
              <MapCanvas
                viewBox="584 340 2204 836"
                preserveAspectRatio="xMidYMid slice"
                role="img"
                aria-label="Security map of Kenya"
              >
                <BaseMap />
                <MapLabels />
                {zones.map((z) => (
                  <circle
                    key={z.level}
                    cx={z.x}
                    cy={z.y}
                    r={z.r}
                    fill={z.color}
                    fillOpacity="0.22"
                    stroke={z.color}
                    strokeWidth="3"
                  />
                ))}
              </MapCanvas>
              <ZoomControl>
                <ZoomButton type="button" aria-label="Zoom in">+</ZoomButton>
                <ZoomButton type="button" aria-label="Zoom out">−</ZoomButton>
              </ZoomControl>
              <Attribution>
                <a href="#leaflet">
                  <svg viewBox="0 0 12 8" aria-hidden="true">
                    <path fill="#4C7BE1" d="M0 0h12v4H0z" />
                    <path fill="#FFD500" d="M0 4h12v3H0z" />
                    <path fill="#E0BC00" d="M0 7h12v1H0z" />
                  </svg>
                  Leaflet
                </a>{" "}
                | © OpenStreetMap, © CARTO
              </Attribution>
            </MapFrame>
            <Legend>
              {legend.map((l) => (
                <LegendItem key={l.label}>
                  <Swatch $color={l.color} />
                  {l.label}
                </LegendItem>
              ))}
              <LegendItem>● Geo-tagged event</LegendItem>
            </Legend>
          </Card>
        </Content>
      </Main>
    </Shell>
  );
}
